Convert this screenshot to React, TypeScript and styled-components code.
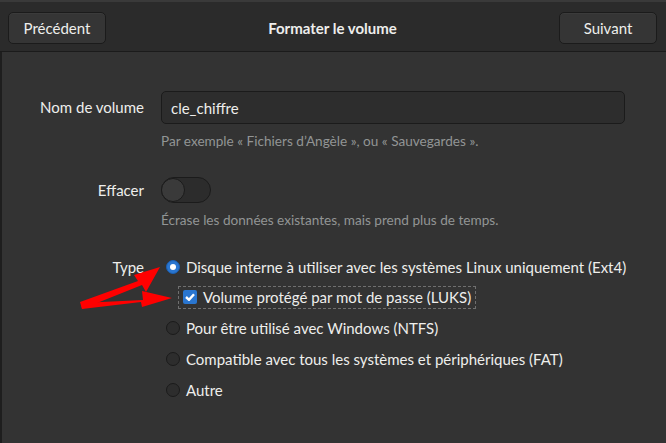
import styled, { createGlobalStyle } from 'styled-components'

const Global = createGlobalStyle`
	html, body {
		margin: 0;
		padding: 0;
		background: #333333;
	}
	body {
		font-family: Lato, "Noto Sans", sans-serif;
		font-size: 15px;
		color: #eeeeec;
		width: 666px;
		height: 443px;
		overflow: hidden;
	}
`

const Window = styled.div`
	position: relative;
	width: 666px;
	height: 443px;
	display: flex;
	flex-direction: column;
	background: #333333;
`

const TopStrip = styled.div`
	height: 2px;
	background: #3a3a3a;
`

const HeaderBar = styled.header`
	height: 50px;
	box-sizing: border-box;
	padding: 10px 9px 0 8px;
	display: flex;
	align-items: flex-start;
	justify-content: space-between;
	background: #2b2b2b;
	border-bottom: 1px solid #1b1b1b;
`

const HeaderButton = styled.button`
	width: 98px;
	height: 32px;
	box-sizing: border-box;
	border: 1px solid #1b1b1b;
	border-radius: 5px;
	background: #353535;
	color: #eeeeec;
	font-family: inherit;
	font-size: 15px;
	box-shadow: inset 0 1px rgba(255, 255, 255, 0.03);
`

const Title = styled.h1`
	margin: 0;
	line-height: 32px;
	font-size: 15px;
	font-weight: 700;
`

const Body = styled.main`
	flex: 1;
	border-left: 2px solid #1e1e1e;
	padding: 39px 0 0 6px;
`

const Form = styled.div`
	display: grid;
	grid-template-columns: 136px 464px;
	column-gap: 17px;
	align-items: start;
`

const Label = styled.div<{ $top: number }>`
	text-align: right;
	padding-top: ${(p) => p.$top}px;
	line-height: 20px;
	white-space: nowrap;
`

const Field = styled.div`
	display: flex;
	flex-direction: column;
`

const Entry = styled.div`
	height: 33px;
	box-sizing: border-box;
	border: 1px solid #1b1b1b;
	border-radius: 5px;
	background: #2d2d2d;
	padding: 0 9px;
	display: flex;
	align-items: center;
`

const Hint = styled.div<{ $gap: number; $after: number }>`
	margin-top: ${(p) => p.$gap}px;
	margin-bottom: ${(p) => p.$after}px;
	font-size: 13.6px;
	line-height: 16px;
	color: #929595;
	white-space: nowrap;
`

const Switch = styled.div`
	width: 50px;
	height: 26px;
	box-sizing: border-box;
	border: 1px solid #1b1b1b;
	border-radius: 13px;
	background: #2c2c2c;
	display: flex;
	align-items: center;
`

const Knob = styled.div`
	width: 24px;
	height: 24px;
	box-sizing: border-box;
	border-radius: 50%;
	border: 1px solid #1b1b1b;
	background: #3a3a3a;
	margin-left: -1px;
`

const Options = styled.div`
	display: flex;
	flex-direction: column;
	margin-left: 5px;
	white-space: nowrap;
`

const Option = styled.div`
	height: 31px;
	display: flex;
	align-items: center;
	gap: 6px;
`

const Radio = styled.span<{ $on?: boolean }>`
	width: 14px;
	height: 14px;
	flex: none;
	box-sizing: border-box;
	border-radius: 50%;
	border: 1px solid ${(p) => (p.$on ? '#1a5fb4' : '#1b1b1b')};
	background: ${(p) => (p.$on ? '#2a76d0' : '#2d2d2d')};
	display: flex;
	align-items: center;
	justify-content: center;
	&::after {
		content: '';
		display: ${(p) => (p.$on ? 'block' : 'none')};
		width: 6px;
		height: 6px;
		border-radius: 50%;
		background: #ffffff;
	}
`

const CheckRow = styled.div`
	height: 30px;
	display: flex;
	align-items: center;
	padding-left: 12px;
`

const FocusBox = styled.div`
	height: 23px;
	box-sizing: border-box;
	border: 1px dashed #6f6f6f;
	display: flex;
	align-items: center;
	gap: 6px;
	padding: 0 4px;
`

const Check = styled.span`
	width: 14px;
	height: 14px;
	flex: none;
	border-radius: 2px;
	background: #2a76d0;
	display: flex;
	align-items: center;
	justify-content: center;
`

const Arrows = styled.svg`
	position: absolute;
	left: 0;
	top: 0;
	pointer-events: none;
`

export default function App() {
	return (
		<>
			<Global />
			<Window>
				<TopStrip />
				<HeaderBar>
					<HeaderButton>Précédent</HeaderButton>
					<Title>Formater le volume</Title>
					<HeaderButton>Suivant</HeaderButton>
				</HeaderBar>
				<Body>
					<Form>
						<Label $top={6}>Nom de volume</Label>
						<Field>
							<Entry>cle_chiffre</Entry>
							<Hint $gap={9} $after={28}>
								Par exemple « Fichiers d’Angèle », ou « Sauvegardes ».
							</Hint>
						</Field>
						<Label $top={3}>Effacer</Label>
						<Field>
							<Switch>
								<Knob />
							</Switch>
							<Hint $gap={9} $after={23}>
								Écrase les données existantes, mais prend plus de temps.
							</Hint>
						</Field>
						<Label $top={6}>Type</Label>
						<Options>
							<Option>
								<Radio $on />
								Disque interne à utiliser avec les systèmes Linux uniquement (Ext4)
							</Option>
							<CheckRow>
								<FocusBox>
									<Check>
										<svg width="10" height="8" viewBox="0 0 10 8">
											<path d="M1 4 L4 6.8 L9 1.2" fill="none" stroke="#fff" strokeWidth="2.4" />
										</svg>
									</Check>
									Volume protégé par mot de passe (LUKS)
								</FocusBox>
							</CheckRow>
							<Option>
								<Radio />
								Pour être utilisé avec Windows (NTFS)
							</Option>
							<Option>
								<Radio />
								Compatible avec tous les systèmes et périphériques (FAT)
							</Option>
							<Option>
								<Radio />
								Autre
							</Option>
						</Options>
					</Form>
				</Body>
				<Arrows width="666" height="443" viewBox="0 0 666 443">
					<g fill="#ff0000">
						<polygon points="80,302 138,281 134,275 160,267 146,292 142,285 82,309" />
						<polygon points="81,303 143,300 142,291 172,298 142,307 141,302 82,309" />
					</g>
				</Arrows>
			</Window>
		</>
	)
}
